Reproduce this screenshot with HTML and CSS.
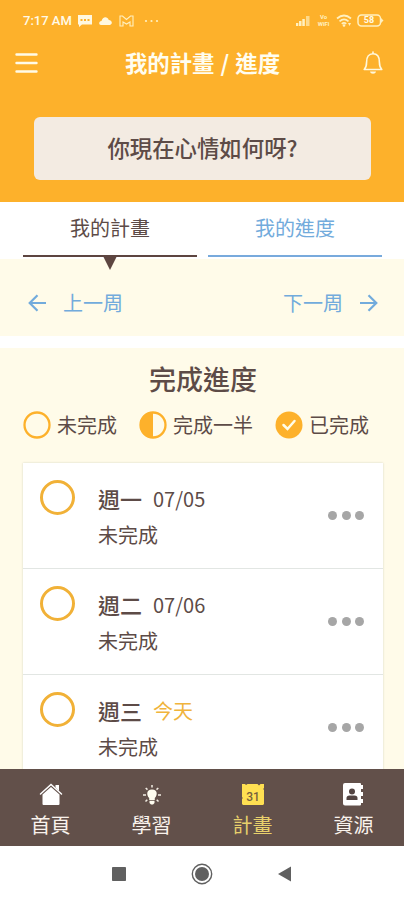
FILE: index.html
```
<!DOCTYPE html>
<html lang="zh-Hant">
<head>
<meta charset="utf-8">
<meta name="viewport" content="width=device-width, initial-scale=1">
<title>我的計畫 / 進度</title>
<link rel="stylesheet" href="styles.css">
</head>
<body>
<div class="phone">
  <header class="header">
    <div class="status">
      <div class="status-left">
        <span class="clock">7:17 AM</span>
        <svg width="14" height="12" viewBox="0 0 14 12"><path fill="#fff8e0" d="M0 0h14v9.500H4L1 12V9.500H0z"/><g fill="#fdb12b"><rect x="2.500" y="4" width="2" height="2"/><rect x="6" y="4" width="2" height="2"/><rect x="9.500" y="4" width="2" height="2"/></g></svg>
        <svg class="cloud" width="13" height="8" viewBox="0 0 13 8"><path fill="#fff8e0" d="M2 8C-.7 7.500-.3 4.300 2.500 4 3.500-.8 8.500-1 9.800 3c3.500.2 4 4.500 1.200 5z"/></svg>
        <svg class="mail" width="15" height="12" viewBox="0 0 15 12"><path fill="none" stroke="#fff0c0" stroke-width="1.100" d="M1 1h2.500l4 3.500 4-3.500H14v10h-3V7L7.500 9 4 7v4H1z"/></svg>
        <svg class="more" width="15" height="4" viewBox="0 0 15 4"><g fill="#fff0c0"><circle cx="2" cy="2" r="1.100"/><circle cx="7.500" cy="2" r="1.100"/><circle cx="13" cy="2" r="1.100"/></g></svg>
      </div>
      <div class="status-right">
        <svg width="14" height="11" viewBox="0 0 14 11"><g fill="#fff0c0"><rect x="0" y="8" width="2.300" height="3"/><rect x="3" y="6" width="2.500" height="5"/><rect x="6.300" y="4" width="2.500" height="7"/><rect x="10" y="1" width="3.500" height="10" opacity=".65"/></g></svg>
        <span class="volte"><span>Vo</span><span>WiFi</span></span>
        <svg class="wifi" width="16" height="13" viewBox="0 0 16 13"><g fill="none" stroke="#fff0c0" stroke-width="1.700"><path d="M1 4.500q7-6 14 0M3.500 7.300q4.500-4 9 0M5.800 9.800q2.200-2 4.400 0"/></g><circle cx="8" cy="11.500" r="1.300" fill="#fff0c0"/><path fill="#fff0c0" d="M12 9h3l-1.500 3z"/></svg>
        <span class="battery"><svg width="27" height="13" viewBox="0 0 27 13"><rect x="1" y="1" width="22.500" height="11" rx="3.500" fill="none" stroke="#fff0c0" stroke-width="1.500"/><path fill="#fff0c0" d="M24 4l2.500 2.500L24 9z"/></svg><span class="level">58</span></span>
      </div>
    </div>
    <div class="titlebar">
      <svg width="23" height="20" viewBox="0 0 23 20"><path stroke="#fffbe8" stroke-width="2.400" stroke-linecap="round" d="M1.500 1.500h20M1.500 10h20M1.500 18.500h20"/></svg>
      <h1>我的計畫 / 進度</h1>
      <svg width="20" height="24" viewBox="0 0 20 24"><g fill="none" stroke="#fff8dc" stroke-width="1.600" stroke-linejoin="round" stroke-linecap="round"><path d="M1.200 18.500C3.200 16.500 3.600 15 3.600 11c0-5 2.200-8.200 6.400-8.200s6.400 3.200 6.400 8.200c0 4 .4 5.500 2.400 7.500z"/><path d="M10 1v1.500"/></g><path fill="#fff8dc" d="M7 20.500h6c-.5 3-5.500 3-6 0z"/></svg>
    </div>
    <button class="mood">你現在心情如何呀?</button>
  </header>

  <nav class="tabs">
    <div class="tab active">我的計畫</div>
    <div class="tab">我的進度</div>
  </nav>

  <div class="week">
    <div class="week-link"><svg width="19" height="18" viewBox="0 0 19 18"><path fill="none" stroke="#72abdc" stroke-width="2.200" d="M18 9H2M9.500 1.200L1.700 9l7.800 7.800"/></svg><span>上一周</span></div>
    <div class="week-link"><span>下一周</span><svg width="19" height="18" viewBox="0 0 19 18"><path fill="none" stroke="#72abdc" stroke-width="2.200" d="M1 9h16M9.500 1.200L17.300 9l-7.800 7.800"/></svg></div>
  </div>

  <main class="progress">
    <h2>完成進度</h2>
    <div class="legend">
      <div class="key"><svg width="28" height="28" viewBox="0 0 28 28"><circle cx="14" cy="14" r="12.500" fill="none" stroke="#fdb12b" stroke-width="2.300"/></svg><span>未完成</span></div>
      <div class="key"><svg width="28" height="28" viewBox="0 0 28 28"><circle cx="14" cy="14" r="12.500" fill="none" stroke="#fdb12b" stroke-width="2.300"/><path fill="#fdb12b" d="M14 1a13 13 0 0 0 0 26z"/></svg><span>完成一半</span></div>
      <div class="key"><svg width="28" height="28" viewBox="0 0 28 28"><circle cx="14" cy="14" r="13.500" fill="#fdb12b"/><path fill="none" stroke="#fffde9" stroke-width="2.500" stroke-linecap="round" d="M8.500 14l4 4 7-8"/></svg><span>已完成</span></div>
    </div>
    <div class="days">
      <article class="day">
        <span class="ring"></span>
        <div class="info"><div class="name"><b>週一</b><span>07/05</span></div><div class="state">未完成</div></div>
        <div class="dots"><i></i><i></i><i></i></div>
      </article>
      <article class="day">
        <span class="ring"></span>
        <div class="info"><div class="name"><b>週二</b><span>07/06</span></div><div class="state">未完成</div></div>
        <div class="dots"><i></i><i></i><i></i></div>
      </article>
      <article class="day">
        <span class="ring"></span>
        <div class="info"><div class="name"><b>週三</b><span class="today">今天</span></div><div class="state">未完成</div></div>
        <div class="dots"><i></i><i></i><i></i></div>
      </article>
    </div>
  </main>

  <nav class="bottom">
    <div class="item"><svg width="24" height="24" viewBox="0 0 24 24"><path fill="#fff" d="M3.500 12.500L12 5l8.500 7.500V22q0 1-1 1h-15q-1 0-1-1zM16.500 3H20v6l-3.500-3.500z"/><path fill="none" stroke="#fff" stroke-width="1.500" stroke-linecap="round" d="M1.500 12L12 2.500 22.500 12"/></svg><span>首頁</span></div>
    <div class="item"><svg width="24" height="24" viewBox="0 0 24 24"><path fill="#fffdf0" d="M12 7.500c-6 0-5.500 6-2.800 8.500V18h5.600v-2c2.700-2.500 3.200-8.500-2.800-8.500zM9.500 18.800h5V21L13 22.500h-2L9.500 21z"/><path stroke="#f4eee5" stroke-width="1.500" d="M12 3v2.500M5.700 6l1.800 1.600M18.300 6l-1.800 1.600M3 13h3M18 13h3M5.500 19.500l1.800-1.800M18.500 19.500l-1.800-1.800"/></svg><span>學習</span></div>
    <div class="item selected"><svg width="24" height="24" viewBox="0 0 24 24"><path fill="#ffe052" d="M1 2h3l1 1 1.500-1h10l1.500 1.500L19.500 2H23v4l-.8 1 .8 1v14l-1 1H2l-1-1v-5l.8-1-.8-1z"/><text class="date" x="12" y="19" text-anchor="middle">31</text></svg><span>計畫</span></div>
    <div class="item"><svg width="24" height="24" viewBox="0 0 24 24"><path fill="#fff" d="M3 1h15q1 0 1 1v20.500q0 1-1 1H3q-2 0-2-2V3q0-2 2-2zM18.500 3H21v4h-2.500zM18.500 10H21v4h-2.500zM18.500 17H21v4h-2.500z"/><circle cx="10" cy="9.500" r="3" fill="#514341"/><path fill="#514341" d="M4.500 18v-2q0-2.500 3-2.500h5q3 0 3 2.500v2z"/></svg><span>資源</span></div>
  </nav>

  <div class="system">
    <svg width="22" height="22" viewBox="0 0 22 22"><rect x="4" y="4" width="14" height="14" rx=".8" fill="#606060"/></svg>
    <svg width="22" height="22" viewBox="0 0 22 22"><circle cx="11" cy="11" r="9.700" fill="none" stroke="#606060" stroke-width="1.400"/><circle cx="11" cy="11" r="7" fill="#606060"/></svg>
    <svg width="22" height="22" viewBox="0 0 22 22"><path fill="#606060" d="M4 11l13-7.500v15z"/></svg>
  </div>
</div>
</body>
</html>
```
FILE: styles.css
```
* { box-sizing: border-box; }
body {
  margin: 0;
  background: #fff;
  font-family: "Noto Sans", "Noto Sans CJK TC", sans-serif;
  color: #5d4b47;
}
svg { display: block; flex: none; }
.phone {
  width: 404px;
  height: 900px;
  overflow: hidden;
  display: flex;
  flex-direction: column;
}

.header {
  flex: none;
  height: 202px;
  background: #fdb12b;
  display: flex;
  flex-direction: column;
}
.status {
  height: 41px;
  padding: 0 20px 0 23px;
  display: flex;
  align-items: center;
  justify-content: space-between;
  color: #fffae8;
}
.status-left, .status-right { display: flex; align-items: center; }
.clock {
  width: 55px;
  font: 500 13px/16px Roboto, sans-serif;
  white-space: nowrap;
}
.cloud { margin-left: 7px; }
.mail { margin-left: 7px; }
.more { margin-left: 10px; }
.volte {
  width: 15px;
  margin-left: 6px;
  display: flex;
  flex-direction: column;
  align-items: center;
  font: 700 6px/8px Roboto, sans-serif;
  color: #fff0c0;
}
.volte span + span { margin-top: -1px; }
.wifi { margin-left: 5px; }
.battery {
  margin-left: 5px;
  display: grid;
  align-items: center;
}
.battery svg, .level { grid-area: 1 / 1; }
.level {
  padding-right: 3px;
  text-align: center;
  font: 700 9px/13px Roboto, sans-serif;
}
.titlebar {
  height: 44px;
  padding: 0 21px 0 15px;
  display: flex;
  align-items: center;
  justify-content: space-between;
}
h1 {
  margin: 0;
  padding: 0 0 3px 4px;
  font-family: "Noto Sans CJK TC", sans-serif;
  font-size: 22.400px;
  line-height: 32px;
  font-weight: 700;
  word-spacing: 1px;
  color: #fffdf0;
}
.mood {
  width: 337px;
  height: 63px;
  margin: 32px 0 0 34px;
  padding: 0 0 4px;
  border: 0;
  border-radius: 6px;
  background: #f3ebe2;
  color: #5d4b47;
  font: 500 22.400px/32px "Noto Sans CJK TC", sans-serif;
}

.tabs {
  flex: none;
  height: 57px;
  padding: 0 22px 2px 23px;
  display: grid;
  grid-template-columns: 174px 174px;
  gap: 11px;
}
.tab {
  position: relative;
  height: 55px;
  padding-top: 12px;
  border-bottom: 2px solid #78aadc;
  color: #72abdc;
  font-size: 20px;
  line-height: 30px;
  text-align: center;
}
.tab.active { color: #5d4b47; border-color: #5d4540; }
.tab.active::after {
  content: "";
  position: absolute;
  top: 54px;
  left: 80px;
  border: 7px solid transparent;
  border-top: 14px solid #5d4540;
  border-bottom: 0;
}

.week {
  flex: none;
  height: 89px;
  padding: 0 26px 0 28px;
  border-bottom: 12px solid #fff;
  background: #fffbe9;
  display: flex;
  justify-content: space-between;
}
.week-link {
  height: 88px;
  display: flex;
  align-items: center;
  gap: 16px;
  color: #72abdc;
  font-size: 20px;
  line-height: 30px;
}
.week-link span { padding-top: 2px; }

.progress {
  flex: none;
  height: 421px;
  overflow: hidden;
  background: #fffbe9;
}
h2 {
  margin: 0;
  padding: 12px 0 0 2px;
  font-size: 27px;
  line-height: 40px;
  font-weight: 500;
  text-align: center;
}
.legend {
  height: 30px;
  margin-top: 10px;
  padding-left: 23px;
  display: flex;
  align-items: center;
  gap: 22px;
  font-size: 20px;
  line-height: 30px;
}
.key { display: flex; align-items: center; gap: 6px; white-space: nowrap; }
.key span { padding-top: 2px; }
.days {
  width: 360px;
  margin: 23px 0 0 23px;
  background: #fff;
  box-shadow: 0 0 2px rgba(80, 100, 80, .25);
}
.day {
  height: 106px;
  padding: 17px 19px 0 17px;
  border-bottom: 1px solid #e2e6e3;
  display: flex;
}
.ring {
  flex: none;
  width: 35px;
  height: 35px;
  border: 3px solid #f1b137;
  border-radius: 50%;
}
.info { flex: 1; padding-left: 23px; }
.name {
  height: 36px;
  display: flex;
  align-items: center;
  gap: 11px;
  font-family: "Noto Sans CJK TC", sans-serif;
  font-size: 20px;
  line-height: 30px;
}
.name span { padding-top: 1px; }
.name b { font-size: 22px; font-weight: 500; }
.name .today { padding-top: 2px; color: #f0b43c; }
.state { padding-top: 5px; font-size: 20px; line-height: 30px; }
.dots { height: 71px; display: flex; align-items: center; gap: 4.500px; }
.dots i { width: 9px; height: 9px; border-radius: 50%; background: #a6a6a6; }

.bottom {
  flex: none;
  height: 77px;
  background: #62504a;
  display: grid;
  grid-template-columns: repeat(4, 1fr);
}
.item {
  padding-top: 13px;
  display: flex;
  flex-direction: column;
  align-items: center;
  color: #f9f2ec;
  font-size: 20px;
  line-height: 30px;
}
.item span { margin-top: 5px; }
.selected { color: #e8d06c; }
.date { font: 500 12px Roboto, sans-serif; fill: #75603d; }

.system {
  flex: none;
  height: 54px;
  padding-top: 1px;
  padding-right: 1px;
  display: flex;
  align-items: center;
  justify-content: center;
  gap: 61px;
}
```
